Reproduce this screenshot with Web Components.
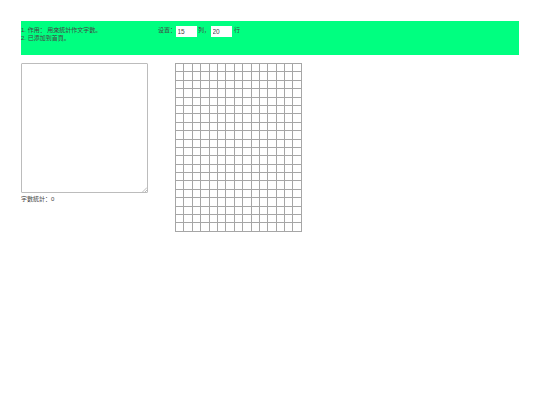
<!DOCTYPE html>
<html>
<head>
<meta charset="utf-8">
<style>
    html, body { margin: 0; background: #fff; }
    body {
        font-family: "Liberation Sans", "Noto Sans CJK SC", sans-serif;
        font-size: 6px;
        color: #444;
    }
    .page { padding: 21px 21px 0; }
    .main { display: flex; align-items: flex-start; margin-top: 8.5px; }
</style>
</head>
<body>
<div class="page">
    <note-bar cols="15" rows="20"></note-bar>
    <div class="main">
        <word-counter></word-counter>
        <paper-grid cols="15" rows="20"></paper-grid>
    </div>
</div>

<template id="note-bar">
    <style>
        :host {
            display: flex;
            height: 33.5px;
            box-sizing: border-box;
            width: 498px;
            background: #00ff80;
            padding-top: 4.5px;
            line-height: 8.5px;
        }
        .notes { width: 137px; }
        .setting { display: flex; align-items: flex-start; height: 11px; }
        .setting span { margin-top: 0.5px; }
        input {
            width: 21px;
            height: 10.5px;
            box-sizing: border-box;
            border: 0;
            margin: 0.5px 0 0;
            padding: 0 1.5px;
            background: #fff;
            color: #444;
            font: inherit;
            font-size: 6.5px;
        }
        .label { width: 18px; }
        .sep { width: 14px; padding-left: 1px; box-sizing: border-box; }
        .end { padding-left: 2px; }
    </style>
    <div class="notes">
        <div>1. 作用： 用來統計作文字數。</div>
        <div>2. 已添加到首頁。</div>
    </div>
    <div class="setting">
        <span class="label">设置：</span><input id="cols"><span class="sep">列，</span><input id="rows"><span class="end">行</span>
    </div>
</template>

<template id="word-counter">
    <style>
        :host { display: block; width: 154px; }
        .box { position: relative; width: 126.5px; height: 130px; }
        textarea {
            display: block;
            width: 100%;
            height: 100%;
            box-sizing: border-box;
            margin: 0;
            padding: 1px;
            border: 1px solid #bcbcbc;
            border-radius: 1px;
            background: #fff;
            font: inherit;
            resize: none;
        }
        svg { position: absolute; right: 1px; bottom: 1px; }
        p { margin: 2px 0 0; line-height: 8px; }
    </style>
    <div class="box">
        <textarea></textarea>
        <svg width="5" height="5" viewBox="0 0 5 5"><path d="M0.5 5L5 0.5M3 5L5 3" stroke="#aaa" stroke-width="0.8" fill="none"/></svg>
    </div>
    <p>字數統計：<span id="count">0</span></p>
</template>

<template id="paper-grid">
    <style>
        :host {
            display: grid;
            box-sizing: border-box;
            border-right: 1px solid #a6a6a6;
            border-bottom: 1px solid #a6a6a6;
        }
        i {
            display: block;
            box-sizing: border-box;
            border-left: 1px solid #a6a6a6;
            border-top: 1px solid #a6a6a6;
        }
    </style>
</template>

<script>
    function mount(el, id){
        const root = el.attachShadow({mode: 'open'});
        root.appendChild(document.getElementById(id).content.cloneNode(true));
        return root;
    }

    class NoteBar extends HTMLElement{
        constructor(){
            super();
            mount(this, 'note-bar');
        }
        connectedCallback(){
            this.shadowRoot.querySelector('#cols').value = this.getAttribute('cols');
            this.shadowRoot.querySelector('#rows').value = this.getAttribute('rows');
        }
    }

    class WordCounter extends HTMLElement{
        constructor(){
            super();
            const root = mount(this, 'word-counter');
            root.querySelector('textarea').addEventListener('input', evt => {
                root.querySelector('#count').textContent = evt.target.value.replace(/\s/g, '').length;
            });
        }
    }

    class PaperGrid extends HTMLElement{
        constructor(){
            super();
            mount(this, 'paper-grid');
        }
        connectedCallback(){
            const cols = +this.getAttribute('cols');
            const rows = +this.getAttribute('rows');
            this.style.gridTemplateColumns = `repeat(${cols}, 8.4px)`;
            this.style.gridTemplateRows = `repeat(${rows}, 8.4px)`;
            for(let i = 0; i < cols * rows; i++){
                this.shadowRoot.appendChild(document.createElement('i'));
            }
        }
    }

    customElements.define('note-bar', NoteBar);
    customElements.define('word-counter', WordCounter);
    customElements.define('paper-grid', PaperGrid);
</script>
</body>
</html>
